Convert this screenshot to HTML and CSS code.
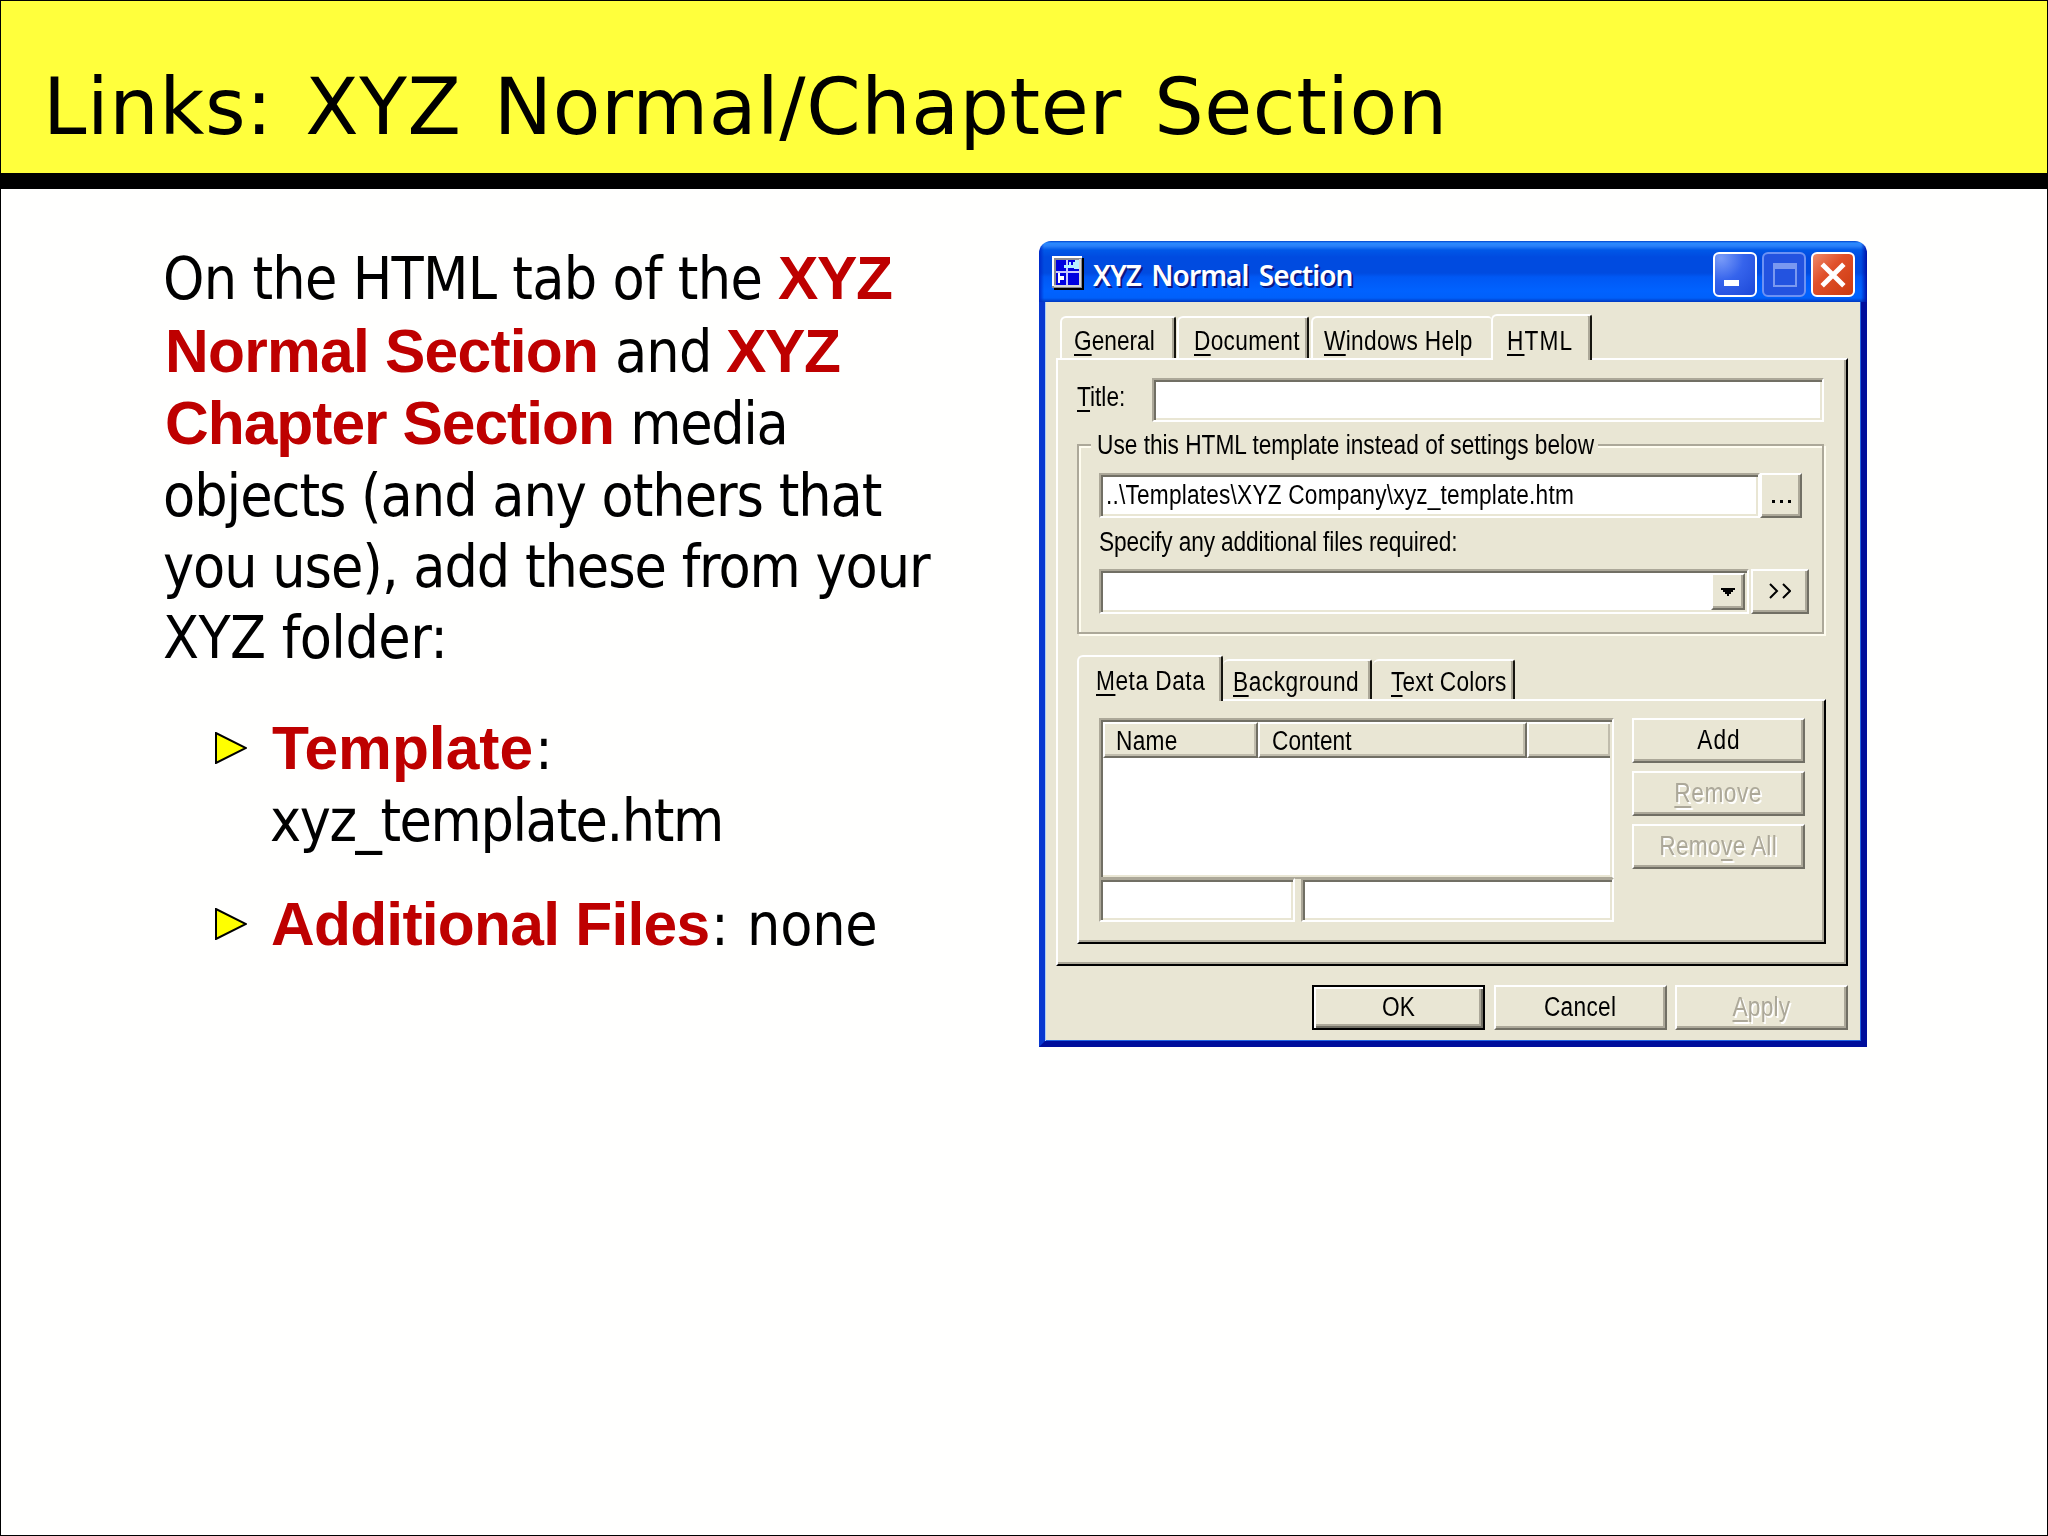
FILE: index.html
```html
<!DOCTYPE html>
<html lang="en">
<head>
<meta charset="utf-8">
<title>Links: XYZ Normal/Chapter Section</title>
<link rel="stylesheet" href="styles.css">
</head>
<body>
<main class="slide">
  <header class="slide-head"><h1>Links: XYZ Normal/Chapter Section</h1></header>
  <div class="content">
    <section class="copy">
      <p class="line"><span class="s-on">On the HTML tab of the </span><b class="s-xyz">XYZ</b></p>
      <p class="line inset"><b class="s-normal">Normal Section</b><span class="s-and"> and </span><b class="s-xyz">XYZ</b></p>
      <p class="line inset"><b class="s-chapter">Chapter Section</b><span class="s-media"> media</span></p>
      <p class="line"><span class="s-objects">objects (and any others that</span></p>
      <p class="line short"><span class="s-objects">you use), add these from your</span></p>
      <p class="line short"><span class="s-folder">XYZ folder:</span></p>
      <ul>
        <li>
          <svg class="arrow" viewBox="0 0 32 32"><path d="M1 1V31L31 16Z"/></svg>
          <div>
            <p class="line"><b class="s-template">Template</b><span class="colon">:</span></p>
            <p class="line"><span class="s-file">xyz_template.htm</span></p>
          </div>
        </li>
        <li>
          <svg class="arrow" viewBox="0 0 32 32"><path d="M1 1V31L31 16Z"/></svg>
          <p class="line"><b class="s-files">Additional Files</b><span class="s-none">: none</span></p>
        </li>
      </ul>
    </section>

    <section class="dialog">
      <div class="titlebar">
        <svg class="app-icon" viewBox="0 0 32 34">
          <path d="M2 2H32V34H2Z" fill="#000"/><path d="M0 0H30V32H0Z" fill="#8b8b93"/><path d="M0 0H30V2H2V30H0Z" fill="#fff"/>
          <path d="M27 3H29V31H2V29H27Z" fill="#d8d8d8"/>
          <path d="M4 4H27V29H4Z" fill="#0000e0"/><path d="M14 4H16V29H14ZM4 15H27V17H4Z" fill="#c8c8ff"/>
          <path d="M23 4H27V13H22V12H12V9H17V6H19V9H21V6H23Z" fill="#b8f0ff"/><path d="M6 17H8V20H12V24H8V27H6Z" fill="#fff"/>
        </svg>
        <span class="caption">XYZ Normal Section</span>
        <div class="window-buttons">
          <span class="wb"><i class="min"></i></span>
          <span class="wb dim"><i class="max"></i></span>
          <span class="wb close"><svg viewBox="0 0 24 24"><path d="M2 2L22 22M22 2L2 22"/></svg></span>
        </div>
      </div>
      <div class="client">
        <nav class="tabs">
          <span class="tab t-general"><span class="t"><u>G</u>eneral</span></span>
          <span class="tab t-document"><span class="t loose"><u>D</u>ocument</span></span>
          <span class="tab t-help"><span class="t loose"><u>W</u>indows Help</span></span>
          <span class="tab active t-html"><span class="t wider"><u>H</u>TML</span></span>
        </nav>
        <div class="panel">
          <div class="row title-row"><label class="title-label"><span class="t"><u>T</u>itle:</span></label><div class="field title-field"></div></div>
          <div class="group">
            <div class="legend"><span class="t">Use this HTML template instead of settings below</span></div>
            <div class="row">
              <div class="field template-field"><span class="t path">..\Templates\XYZ Company\xyz_template.htm</span></div>
              <div class="btn browse"><i></i><i></i><i></i></div>
            </div>
            <div class="files-label"><span class="t tight">Specify any additional files required:</span></div>
            <div class="row files-row">
              <div class="field combo"><div class="btn drop"><svg viewBox="0 0 14 8"><path d="M0 0H14V2H12V4H10V6H8V8H6V6H4V4H2V2H0Z"/></svg></div></div>
              <div class="btn more"><svg viewBox="0 0 22 16"><path d="M1 1L8 8L1 15M14 1L21 8L14 15"/></svg></div>
            </div>
          </div>
          <nav class="tabs sub">
            <span class="tab active t-meta"><span class="t wide-set"><u>M</u>eta Data</span></span>
            <span class="tab t-back"><span class="t wide-set"><u>B</u>ackground</span></span>
            <span class="tab t-colors"><span class="t path"><u>T</u>ext Colors</span></span>
          </nav>
          <div class="panel subpanel">
            <div class="meta">
              <div class="list">
                <div class="list-head">
                  <span class="col c-name"><span class="t loose">Name</span></span>
                  <span class="col c-content"><span class="t">Content</span></span>
                  <span class="col c-rest"></span>
                </div>
              </div>
              <div class="row entry"><div class="field name-field"></div><div class="field content-field"></div></div>
            </div>
            <div class="actions">
              <div class="btn wide"><span class="t centered wider">Add</span></div>
              <div class="btn wide off"><span class="t centered wide-set"><u>R</u>emove</span></div>
              <div class="btn wide off"><span class="t centered loose">Remo<u>v</u>e All</span></div>
            </div>
          </div>
        </div>
        <div class="footer">
          <div class="btn wide default"><span class="t centered">OK</span></div>
          <div class="btn wide"><span class="t centered loose">Cancel</span></div>
          <div class="btn wide off"><span class="t centered path"><u>A</u>pply</span></div>
        </div>
      </div>
    </section>
  </div>
</main>
</body>
</html>
```
FILE: styles.css
```css
* { box-sizing: border-box; margin: 0; padding: 0; }
body { width: 2048px; height: 1536px; overflow: hidden; background: #fffffe; color: #000; }

/* Slide */
.slide { width: 2048px; height: 1536px; border: 1px solid #000; }
.slide-head { height: 188px; padding-left: 42px; background: #ffff3c; border-bottom: 16px solid #000; }
h1 { padding-top: 28px; font: 400 78px/156px "DejaVu Sans", sans-serif; letter-spacing: .55px; word-spacing: 7px; white-space: pre; }
.content { display: flex; align-items: flex-start; }
.copy { width: 1038px; padding: 53px 0 0 162px; font: 58.5px/72.5px "DejaVu Sans Condensed", "DejaVu Sans", sans-serif; font-stretch: condensed; }
.line { display: flex; align-items: baseline; height: 72.5px; white-space: pre; }
.line.short { height: 71px; line-height: 71px; }
.line.inset { margin-left: 2px; }
.line b { font-family: "Liberation Sans", sans-serif; font-size: 60.5px; color: #be0000; }
.s-on { width: 615px; letter-spacing: -.7px; }
.s-xyz { letter-spacing: -1.3px; }
.s-normal { width: 434px; letter-spacing: -.75px; }
.s-and { width: 127px; letter-spacing: -.8px; }
.s-chapter { width: 450px; letter-spacing: -1px; }
.s-media { letter-spacing: -1.4px; }
.s-objects { letter-spacing: -1.03px; }
.s-folder { letter-spacing: -.55px; }
.s-template { width: 263px; margin-left: 3px; }
.s-file { margin-left: 1px; letter-spacing: -1.44px; }
.s-files { width: 440px; margin-left: 2px; letter-spacing: -.75px; }
.s-none { word-spacing: 2px; letter-spacing: -.2px; }
ul { list-style: none; padding: 38px 0 0 51px; }
li { display: flex; align-items: flex-start; margin-bottom: 31px; }
.arrow { width: 32px; height: 32px; margin: 20px 22px 0 1px; fill: #ff0; stroke: #000; stroke-width: 2; }

/* Dialog frame */
.dialog { width: 828px; margin-top: 52px; }
.titlebar { display: flex; height: 61px; padding: 0 12px 0 13px; border-radius: 12px 12px 0 0;
  background: linear-gradient(90deg, #0028c8 0, transparent 5px, transparent 822px, #0010a8 828px), linear-gradient(#0042cc 0, #2a8aff 2px, #2a80f8 5px, #0058e8 9px, #004be0 16px, #004be0 32px, #0058f4 36px, #0062ff 50px, #0060fa 57px, #0038c0 61px); }
.app-icon { width: 32px; height: 34px; margin-top: 15px; }
.caption { margin-left: 9px; font: 600 28px/68px "Noto Sans", sans-serif; letter-spacing: -.95px; word-spacing: 4px; color: #fff; text-shadow: 2px 2px 0 #0a1883; white-space: pre; }
.window-buttons { display: flex; gap: 5px; margin: 11px 0 0 auto; }
.wb { display: flex; width: 44px; height: 45px; border: 2px solid #fff; border-radius: 6px; background: radial-gradient(circle at 15% 10%, #7a9cf8, #3664ec 45%, #1c48d8 100%); }
.wb.dim { border-color: #6c92f4; background: #2353e0; }
.wb.close { background: linear-gradient(135deg, #ee8a6c, #e0502a 40%, #cc3a10); }
.min { width: 15px; height: 6px; margin: 26px 0 0 9px; background: #fff; }
.max { width: 24px; height: 24px; margin: 9px 0 0 9px; border: 2px solid #7a98f0; border-top-width: 6px; }
.close svg { width: 26px; height: 26px; margin: 8px 0 0 7px; stroke: #fff; stroke-width: 4.5; }
.client { height: 745px; padding: 12px 13px 0 11px; background: #e9e6d4; border: 6px solid; border-color: #e9e6d4 #000e9c #000e9c #0838d0; border-top-width: 0; box-shadow: inset 1px 0 #a8ccf8, inset -1px -1px #2464e0; font: 27px/1 "Liberation Sans", Arial, sans-serif; }

/* Dialog lettering */
.t { display: inline-block; transform: scaleX(.84); transform-origin: 0 50%; white-space: pre; }
.t.centered { transform-origin: 50% 50%; }
.tight { letter-spacing: -.15px; }
.path { letter-spacing: .23px; }
.loose { letter-spacing: .37px; }
.wide-set { letter-spacing: .62px; }
.wider { letter-spacing: 1.3px; }
u { text-underline-offset: 4px; text-decoration-thickness: 2px; text-decoration-skip-ink: none; }

/* Tabs and panels */
.tabs { position: relative; display: flex; align-items: flex-end; height: 46px; padding-left: 4px; margin-bottom: -2px; }
.tab { height: 42px; margin-bottom: 2px; padding-top: 10px; line-height: 27px; border: solid; border-width: 2px 2px 0 2px; border-color: #fff #16150f #fff #fff; border-radius: 6px 3px 0 0; box-shadow: inset -2px 0 #aca899; }
.tab.active { height: 46px; margin-bottom: 0; padding-top: 12px; background: #e9e6d4; }
.t-general { width: 116px; padding-left: 12px; }
.t-document { width: 132px; padding-left: 15px; margin-left: 1px; }
.t-help { width: 180px; padding-left: 11px; margin-left: 2px; border-right: 0; box-shadow: none; }
.t-html { width: 101px; padding-left: 14px; }
.panel { height: 608px; padding: 18px 17px 0 19px; border: 2px solid; border-color: #fff #000 #000 #fff; box-shadow: inset -2px -2px #aca899; }
.row { display: flex; }
.title-label { width: 75px; padding-top: 6px; }
.field { height: 45px; background: #fff; border: 2px solid; border-color: #aca899 #fff #fff #aca899; box-shadow: inset 2px 2px #716f64, inset -2px -2px #e9e6d4; white-space: nowrap; }
.title-field { width: 672px; height: 44px; }
.group { position: relative; width: 747px; height: 190px; margin-top: 22px; padding: 27px 0 0 20px; border: 2px solid #aca899; box-shadow: inset 2px 2px #fffdf0, 2px 2px #fffdf0; }
.legend { position: absolute; left: 12px; top: -14px; width: 507px; height: 27px; padding-left: 6px; background: #e9e6d4; white-space: nowrap; }
.template-field { width: 661px; padding: 7px 0 0 5px; }
.btn { display: flex; align-items: center; justify-content: center; height: 45px; padding-bottom: 1px; background: #e9e6d4; border: 2px solid; border-color: #fff #716f64 #716f64 #fff; box-shadow: inset -2px -2px #aca899; }
.browse { width: 42px; gap: 5px; padding: 12px 0 0; }
.browse i { width: 3px; height: 3px; background: #000; }
.files-label { height: 51px; padding-top: 11px; white-space: nowrap; }
.combo { display: flex; justify-content: flex-end; width: 650px; padding: 2px; }
.drop { width: 34px; height: 37px; padding: 0; }
.drop svg { width: 14px; height: 8px; }
.files-row { gap: 2px; }
.more { width: 58px; }
.more svg { width: 22px; height: 16px; fill: none; stroke: #000; stroke-width: 2; }
.sub { margin-top: 21px; padding-left: 0; }
.sub .tab:not(.active) { height: 40px; padding-top: 8px; }
.t-meta { width: 146px; padding-left: 17px; }
.tab.t-meta { padding-top: 11px; }
.t-back { width: 149px; padding-left: 10px; border-left-width: 0; }
.t-colors { width: 142px; padding-left: 18px; margin-left: 1px; border-left-width: 0; }
.subpanel { display: flex; width: 749px; height: 245px; padding: 17px 0 0 20px; }

/* Meta data list */
.meta { width: 515px; }
.list { height: 161px; padding: 2px; background: #fff; border: 2px solid; border-color: #aca899 #fff #aca899 #aca899; box-shadow: inset 2px 2px #716f64, inset -2px -2px #e9e6d4; }
.list-head { display: flex; height: 36px; }
.col { padding-top: 4px; background: #e9e6d4; border: 2px solid; border-color: #fff #716f64 #716f64 #fff; box-shadow: inset -2px -2px #c0bcac; }
.c-name { width: 155px; padding-left: 11px; }
.c-content { width: 269px; padding-left: 12px; }
.c-rest { flex: 1; border-right: 0; }
.entry { margin-top: -1px; justify-content: space-between; }
.name-field { width: 196px; height: 44px; }
.content-field { width: 313px; height: 44px; }
.actions { display: flex; flex-direction: column; gap: 8px; margin-left: 18px; }
.wide { width: 173px; }
.off { color: #aca899; text-shadow: 2px 2px #fff; }
.footer { display: flex; justify-content: flex-end; gap: 8.5px; margin-top: 19px; }
.default { border-color: #000; box-shadow: inset 2px 2px #fff, inset -2px -2px #716f64, inset -4px -4px #aca899; }
```
